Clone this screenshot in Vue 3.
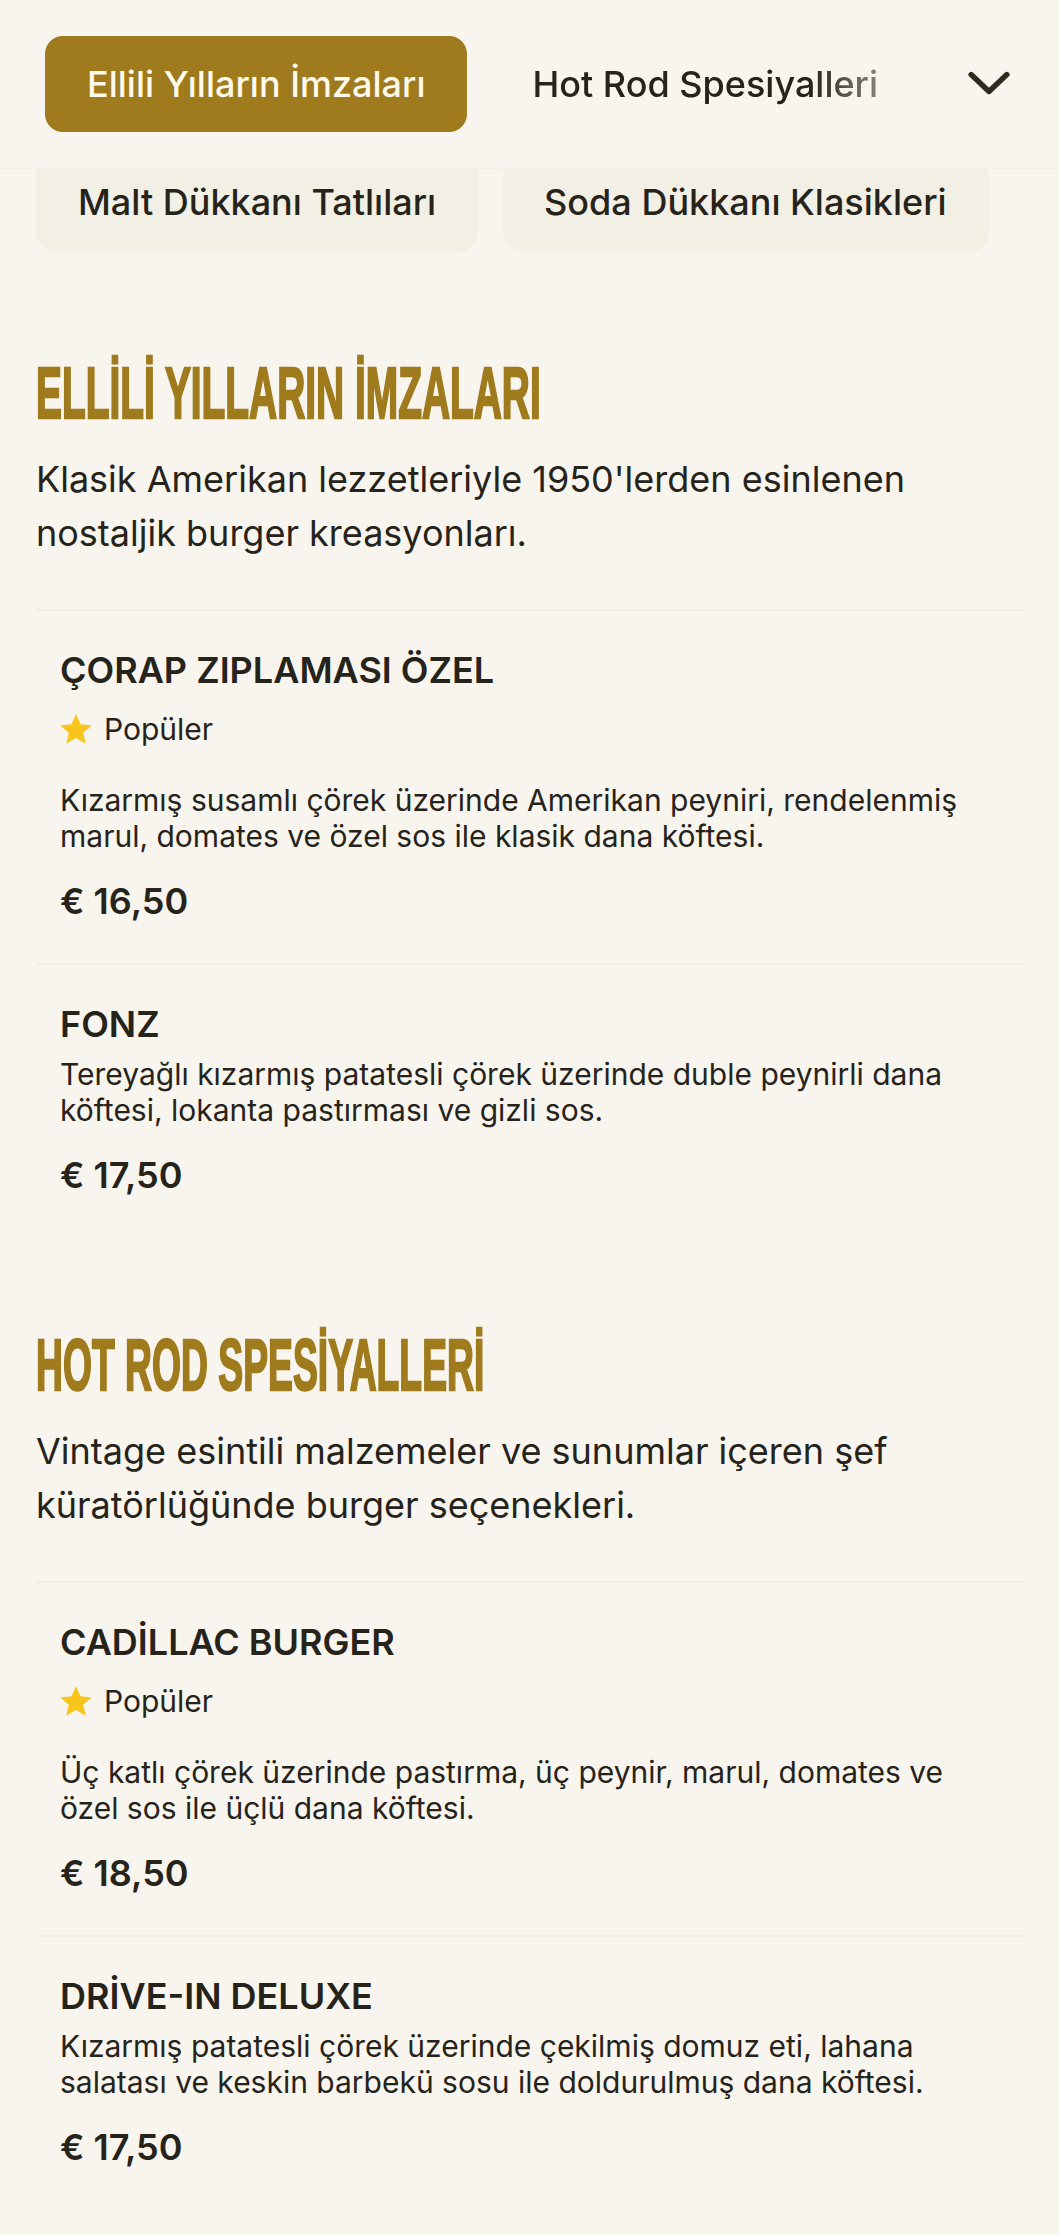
<script setup>
const sections = [
  {
    title: 'ELLİLİ YILLARIN İMZALARI',
    squeeze: 0.54,
    desc: "Klasik Amerikan lezzetleriyle 1950'lerden esinlenen nostaljik burger kreasyonları.",
    items: [
      { name: 'ÇORAP ZIPLAMASI ÖZEL', popular: true, desc: 'Kızarmış susamlı çörek üzerinde Amerikan peyniri, rendelenmiş marul, domates ve özel sos ile klasik dana köftesi.', price: '€ 16,50' },
      { name: 'FONZ', popular: false, desc: 'Tereyağlı kızarmış patatesli çörek üzerinde duble peynirli dana köftesi, lokanta pastırması ve gizli sos.', price: '€ 17,50' }
    ]
  },
  {
    title: 'HOT ROD SPESİYALLERİ',
    squeeze: 0.518,
    desc: 'Vintage esintili malzemeler ve sunumlar içeren şef küratörlüğünde burger seçenekleri.',
    items: [
      { name: 'CADİLLAC BURGER', popular: true, desc: 'Üç katlı çörek üzerinde pastırma, üç peynir, marul, domates ve özel sos ile üçlü dana köftesi.', price: '€ 18,50' },
      { name: 'DRİVE-IN DELUXE', popular: false, desc: 'Kızarmış patatesli çörek üzerinde çekilmiş domuz eti, lahana salatası ve keskin barbekü sosu ile doldurulmuş dana köftesi.', price: '€ 17,50' }
    ]
  }
]
</script>

<template>
  <div class="page">
    <header class="topbar">
      <div class="tabs">
        <button class="tab active">Ellili Yılların İmzaları</button>
        <button class="tab fade">Hot Rod Spesiyalleri</button>
      </div>
      <svg class="chev" viewBox="0 0 40 24" fill="none" stroke="#2f2b1f" stroke-width="5.2" stroke-linecap="round" stroke-linejoin="round">
        <path d="M3 4 L20 20 L37 4" />
      </svg>
    </header>

    <div class="pills">
      <div class="pill">Malt Dükkanı Tatlıları</div>
      <div class="pill">Soda Dükkanı Klasikleri</div>
    </div>

    <section v-for="s in sections" :key="s.title" class="section">
      <h2 class="heading"><span :style="{ transform: `scaleX(${s.squeeze})` }">{{ s.title }}</span></h2>
      <p class="lead">{{ s.desc }}</p>
      <article v-for="it in s.items" :key="it.name" class="item">
        <h3 class="name">{{ it.name }}</h3>
        <div v-if="it.popular" class="badge">
          <svg class="star" viewBox="0 0 24 24"><path fill="#f8c51c" d="M12 .8l3.4 7.7 8.4.8-6.4 5.5 1.9 8.2L12 18.7 4.7 23l1.9-8.2L.2 9.3l8.4-.8z"/></svg>
          <span>Popüler</span>
        </div>
        <p class="desc">{{ it.desc }}</p>
        <div class="price">{{ it.price }}</div>
      </article>
    </section>
  </div>
</template>

<style>
html, body { margin: 0; background: #f8f5ee; }
</style>

<style scoped>
.page {
  position: relative;
  height: 2235px;
  overflow: hidden;
  background: #f8f5ee;
  color: #26231a;
  font-family: Inter, "Liberation Sans", sans-serif;
}
.topbar {
  position: absolute;
  top: 0;
  left: 0;
  right: 0;
  height: 169px;
  box-sizing: border-box;
  background: #f8f5ee;
  border-bottom: 1px solid #f1eee6;
  z-index: 2;
  display: flex;
  align-items: flex-start;
}
.tabs {
  display: flex;
  gap: 24px;
  margin: 36px 0 0 45px;
  width: 835px;
  overflow: hidden;
}
.tab {
  flex: none;
  height: 96px;
  border: 0;
  border-radius: 18px;
  padding: 0 42px;
  font: 500 36px Inter, "Liberation Sans", sans-serif;
  background: transparent;
  color: #26231a;
}
.tab.active { background: #9f7b1d; color: #fdf9ec; }
.tab.fade {
  padding: 0 22px 0 41px;
  -webkit-mask-image: linear-gradient(to right, #000 78%, rgba(0,0,0,.4) 100%);
  mask-image: linear-gradient(to right, #000 78%, rgba(0,0,0,.4) 100%);
}
.chev { width: 42px; height: 26px; margin: 70px 0 0 88px; flex: none; }
.pills {
  display: flex;
  gap: 25px;
  padding: 156px 0 13px 36px;
}
.pill {
  height: 96px;
  line-height: 92px;
  padding: 0 42px;
  border-radius: 20px;
  background: #f2efe5;
  font-size: 36px;
  font-weight: 500;
}
.pill + .pill { padding-left: 41px; }
.section { padding: 0 35px 0 36px; }
.heading {
  margin: 92px 0 0;
  height: 70px;
  color: #9f7b1d;
  font: 700 72px/72px "Liberation Sans", sans-serif;
  -webkit-text-stroke: 2.4px #9f7b1d;
}
.heading span {
  display: inline-block;
  transform-origin: left center;
  white-space: nowrap;
}
.lead {
  margin: 25px 0 0;
  font-size: 36px;
  line-height: 54px;
  padding-bottom: 49px;
}
.item {
  border-top: 2px solid #f1eee6;
  padding: 37px 24px 40px;
}
.name {
  margin: 0;
  font-size: 36px;
  line-height: 44px;
  font-weight: 600;
}
.badge {
  display: flex;
  align-items: center;
  gap: 12px;
  margin-top: 15px;
  font-size: 30px;
  line-height: 44px;
}
.star { width: 32px; height: 32px; }
.desc {
  margin: 10px 0 0;
  font-size: 30px;
  line-height: 36px;
}
.item .badge + .desc { margin-top: 31px; }
.price {
  margin-top: 25px;
  font-size: 36px;
  line-height: 44px;
  font-weight: 600;
}
</style>
